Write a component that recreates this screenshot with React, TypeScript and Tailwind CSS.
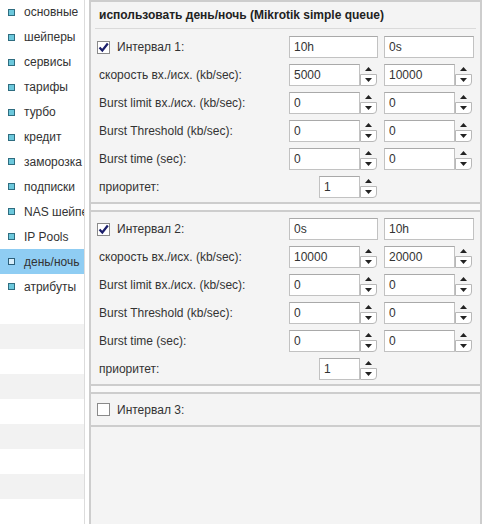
const menu = [
  "основные",
  "шейперы",
  "сервисы",
  "тарифы",
  "турбо",
  "кредит",
  "заморозка",
  "подписки",
  "NAS шейпер",
  "IP Pools",
  "день/ночь",
  "атрибуты",
];

const Spinner = () => (
  <div className="flex h-[22px] w-[17px] flex-col">
    <div className="flex h-[10px] items-center justify-center">
      <svg width="7" height="4" viewBox="0 0 7 4">
        <polygon points="3.5,0 7,4 0,4" fill="#222" />
      </svg>
    </div>
    <div className="flex h-[12px] items-center justify-center rounded-br-[4px] border border-[#b8b8b8] bg-white">
      <svg width="7" height="4" viewBox="0 0 7 4">
        <polygon points="0,0 7,0 3.5,4" fill="#222" />
      </svg>
    </div>
  </div>
);

const TextBox = ({ value, w }: { value: string; w: string }) => (
  <div
    className={`flex h-[22px] items-center border border-[#c2c2c2] border-t-[#a9a9a9] bg-white pl-[4px] text-[12px] text-[#333] ${w}`}
  >
    {value}
  </div>
);

const NumBox = ({ value, w = "w-[71px]" }: { value: string; w?: string }) => (
  <div className="flex items-center">
    <TextBox value={value} w={w} />
    <Spinner />
  </div>
);

const Check = ({ checked }: { checked: boolean }) => (
  <div className="flex h-[13px] w-[13px] items-center justify-center border border-[#8a8a8a] bg-white">
    {checked && (
      <svg width="11" height="11" viewBox="0 0 11 11">
        <path d="M1.5 5.5 L4.3 8.5 L9.8 1.5" fill="none" stroke="#1b1f6b" strokeWidth="2.2" />
      </svg>
    )}
  </div>
);

interface IntervalProps {
  n: number;
  from: string;
  to: string;
  rx: string;
  tx: string;
}

const Interval = ({ n, from, to, rx, tx }: IntervalProps) => {
  const rows: [string, string, string][] = [
    ["скорость вх./исх. (kb/sec):", rx, tx],
    ["Burst limit вх./исх. (kb/sec):", "0", "0"],
    ["Burst Threshold (kb/sec):", "0", "0"],
    ["Burst time (sec):", "0", "0"],
  ];
  return (
    <div className="flex flex-col gap-[6px]">
      <div className="flex h-[22px] items-center">
        <div className="flex w-[198px] items-center gap-[7px] pl-[6px]">
          <Check checked />
          <span>Интервал {n}:</span>
        </div>
        <div className="flex gap-[6px]">
          <TextBox value={from} w="w-[89px]" />
          <TextBox value={to} w="w-[90px]" />
        </div>
      </div>
      {rows.map(([label, a, b]) => (
        <div key={label} className="flex h-[22px] items-center">
          <div className="w-[198px] pl-[8px]">{label}</div>
          <div className="flex gap-[7px]">
            <NumBox value={a} />
            <NumBox value={b} />
          </div>
        </div>
      ))}
      <div className="flex h-[22px] items-center">
        <div className="w-[198px] pl-[8px]">приоритет:</div>
        <div className="flex w-[88px] justify-end">
          <NumBox value="1" w="w-[41px]" />
        </div>
      </div>
    </div>
  );
};

export default function App() {
  return (
    <div
      className="flex h-[524px] w-[493px] overflow-hidden bg-white text-[12px] text-[#333]"
      style={{ fontFamily: '"Liberation Sans", Arial, sans-serif' }}
    >
      {/* sidebar */}
      <div className="flex w-[85px] shrink-0 flex-col border-r border-[#dcdcdc]">
        {menu.map((item) => {
          const active = item === "день/ночь";
          return (
            <div
              key={item}
              className={`flex h-[25px] items-center gap-[9px] overflow-hidden whitespace-nowrap pl-[8px] ${
                active ? "bg-[#8fcdf3]" : "bg-white"
              }`}
            >
              <div
                className={`h-[7px] w-[7px] shrink-0 border ${
                  active ? "border-[#2b5f7a] bg-[#d7eefb]" : "border-[#2f6d80] bg-[#6cc8dc]"
                }`}
              />
              <span>{item}</span>
            </div>
          );
        })}
        {[0, 1, 2, 3, 4, 5, 6, 7, 8].map((i) => (
          <div key={i} className={`h-[25px] shrink-0 ${i % 2 ? "bg-[#f2f2f2]" : "bg-white"}`} />
        ))}
      </div>

      {/* main */}
      <div className="flex flex-1 bg-white pl-[4px] pr-[11px]">
        <div className="flex flex-1 flex-col border-x-2 border-[#cdcdcd] bg-[#f4f4f4]">
          <div className="border-y-2 border-[#cdcdcd] pb-[4px]">
            <div className="flex h-[26px] items-center pl-[8px] font-bold text-[#222]">
              использовать день/ночь (Mikrotik simple queue)
            </div>
            <div className="mx-[4px] mb-[7px] h-px bg-[#dadada]" />
            <Interval n={1} from="10h" to="0s" rx="5000" tx="10000" />
          </div>
          <div className="h-[6px] bg-[#f9f9f9]" />
          <div className="border-y-2 border-[#cdcdcd] pb-[4px] pt-[6px]">
            <Interval n={2} from="0s" to="10h" rx="10000" tx="20000" />
          </div>
          <div className="h-[6px] bg-[#f9f9f9]" />
          <div className="flex h-[35px] items-center gap-[7px] border-y-2 border-[#cdcdcd] pl-[6px]">
            <Check checked={false} />
            <span>Интервал 3:</span>
          </div>
        </div>
      </div>
    </div>
  );
}
